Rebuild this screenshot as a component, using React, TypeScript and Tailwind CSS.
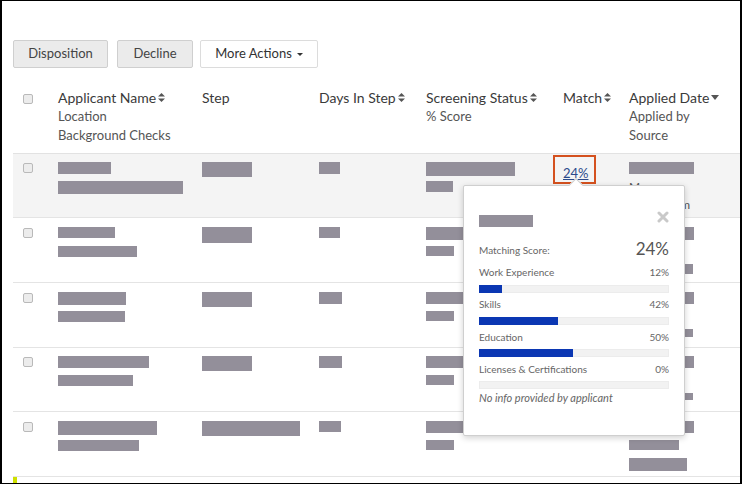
import React from 'react';

type Bar = [number, number];

interface RowData {
  h: number;
  pt: number;
  shaded?: boolean;
  name: Bar[];
  step: Bar;
  days: Bar;
  screen: Bar[];
  applied: (Bar | string)[];
  match?: string;
}

const ROWS: RowData[] = [
  {
    h: 63,
    pt: 8,
    shaded: true,
    name: [[53, 12], [125, 13]],
    step: [50, 15],
    days: [21, 12],
    screen: [[89, 14], [27, 11]],
    applied: [[65, 12], 'Ma', 'Indeed.com'],
    match: '24%',
  },
  {
    h: 64,
    pt: 9,
    name: [[57, 11], [79, 11]],
    step: [50, 16],
    days: [21, 11],
    screen: [[80, 13], [28, 10]],
    applied: [[65, 13], [48, 11], [64, 10]],
  },
  {
    h: 64,
    pt: 9,
    name: [[68, 13], [67, 11]],
    step: [50, 15],
    days: [23, 12],
    screen: [[80, 12], [28, 10]],
    applied: [[65, 12], [48, 11], [64, 8]],
  },
  {
    h: 63,
    pt: 8,
    name: [[91, 12], [75, 11]],
    step: [50, 15],
    days: [23, 12],
    screen: [[80, 12], [28, 10]],
    applied: [[65, 12], [48, 11], [64, 7]],
  },
  {
    h: 64,
    pt: 9,
    name: [[99, 14], [81, 11]],
    step: [98, 15],
    days: [22, 11],
    screen: [[80, 12], [28, 10]],
    applied: [[65, 12], [50, 10], [58, 13]],
  },
];

const SKILLS = [
  { label: 'Work Experience', pct: 12 },
  { label: 'Skills', pct: 42 },
  { label: 'Education', pct: 50 },
  { label: 'Licenses & Certifications', pct: 0 },
];

function SortIcon() {
  return (
    <svg width="7" height="9" viewBox="0 0 7 9" className="ml-[2px] shrink-0">
      <polygon points="0,3.6 3.5,0 7,3.6" fill="#555" />
      <polygon points="0,5.4 3.5,9 7,5.4" fill="#555" />
    </svg>
  );
}

function Caret({ w = 8, h = 5, color = '#555' }: { w?: number; h?: number; color?: string }) {
  return (
    <svg width={w} height={h} viewBox={`0 0 ${w} ${h}`} className="ml-[2px] shrink-0">
      <polygon points={`0,0 ${w},0 ${w / 2},${h}`} fill={color} />
    </svg>
  );
}

function Checkbox() {
  return <span className="block w-[10px] h-[10px] rounded-[2px] border border-[#b9b9b9] bg-[#ececec]" />;
}

function Blk({ bar }: { bar: Bar }) {
  return <div className="bg-[#938f9a]" style={{ width: bar[0], height: bar[1] }} />;
}

function Lines({ items }: { items: (Bar | string)[] }) {
  return (
    <div className="flex flex-col">
      {items.map((it, i) => (
        <div key={i} className="h-[18.5px]">
          {typeof it === 'string' ? (
            <span className="block text-[12px] leading-[14px] text-[#555] -mt-[1px]">{it}</span>
          ) : (
            <Blk bar={it} />
          )}
        </div>
      ))}
    </div>
  );
}

function HeaderCell({ title, subs, sort = true, caret = false, w }: { title: string; subs?: string[]; sort?: boolean; caret?: boolean; w: string }) {
  return (
    <div className={`${w} shrink-0`}>
      <div className="flex items-center h-[19px] text-[14px] text-[#3a3a3a] whitespace-nowrap">
        {title}
        {sort && <SortIcon />}
        {caret && <Caret />}
      </div>
      {subs?.map((s) => (
        <div key={s} className="h-[19px] leading-[19px] text-[13px] text-[#555] whitespace-nowrap">
          {s}
        </div>
      ))}
    </div>
  );
}

function MatchPopover() {
  return (
    <div className="absolute left-[461px] top-[184px] w-[222px] h-[251px] bg-white border border-[#cfcfcf] rounded-[2px] shadow-[0_2px_6px_rgba(0,0,0,0.18)] px-[15px] pt-[29px]">
      <div className="absolute left-[107px] -top-[6px] w-[10px] h-[10px] rotate-45 bg-white border-l border-t border-[#cfcfcf]" />
      <div className="flex items-start justify-between">
        <div className="w-[54px] h-[12px] bg-[#938f9a]" />
        <svg width="12" height="12" viewBox="0 0 12 12" className="-mt-[4px]">
          <path d="M2 2 L10 10 M10 2 L2 10" stroke="#c9c9c9" strokeWidth="3" strokeLinecap="round" />
        </svg>
      </div>
      <div className="flex items-end justify-between mt-[11px] h-[22px]">
        <span className="text-[10px] leading-[14px] text-[#666] mb-[3px]">Matching Score:</span>
        <span className="text-[17px] leading-[22px] text-[#555]">24%</span>
      </div>
      <div className="mt-[5px]">
        {SKILLS.map((s) => (
          <div key={s.label} className="h-[32.3px]">
            <div className="flex justify-between text-[10px] leading-[14px] text-[#666]">
              <span>{s.label}</span>
              <span>{s.pct}%</span>
            </div>
            <div className="mt-[5.5px] h-[8px] bg-[#f2f2f2] border border-[#ececec]">
              {s.pct > 0 && <div className="bg-[#0b37b3] -m-px" style={{ width: `${s.pct}%`, height: 8 }} />}
            </div>
          </div>
        ))}
      </div>
      <div className="-mt-[3px] text-[11px] leading-[14px] italic text-[#666]">No info provided by applicant</div>
    </div>
  );
}

export default function App() {
  return (
    <div
      className="relative w-[742px] h-[484px] overflow-hidden bg-white border-black border-l-2 border-r-2 border-t border-b"
      style={{ fontFamily: 'Lato, "Open Sans", sans-serif' }}
    >
      {/* Toolbar */}
      <div className="flex gap-[10px] pl-[11px] pt-[39px]">
        <button className="h-[28px] w-[95px] bg-[#ebebeb] border border-[#cfcfcf] rounded-[2px] text-[13px] text-[#444]">Disposition</button>
        <button className="h-[28px] w-[76px] bg-[#ebebeb] border border-[#cfcfcf] rounded-[2px] text-[13px] text-[#444] -ml-[1px]">Decline</button>
        <button className="h-[28px] w-[118px] bg-white border border-[#dcdcdc] rounded-[2px] text-[13px] text-[#333] flex items-center justify-center -ml-[3px]">
          More Actions
          <span className="ml-[3px]"><Caret w={6} h={3} color="#333" /></span>
        </button>
      </div>

      {/* Table */}
      <div className="ml-[11px] mt-[20px] w-[760px]">
        <div className="flex h-[66px] border-b border-[#e2e2e2]">
          <div className="w-[45px] shrink-0 pl-[10px] pt-[6px]">
            <Checkbox />
          </div>
          <HeaderCell w="w-[144px]" title="Applicant Name" subs={['Location', 'Background Checks']} />
          <HeaderCell w="w-[117px]" title="Step" sort={false} />
          <HeaderCell w="w-[107px]" title="Days In Step" />
          <HeaderCell w="w-[137px]" title="Screening Status" subs={['% Score']} />
          <HeaderCell w="w-[66px]" title="Match" />
          <HeaderCell w="w-[140px]" title="Applied Date" sort={false} caret subs={['Applied by', 'Source']} />
        </div>

        {ROWS.map((r, i) => (
          <div
            key={i}
            className={`flex border-b border-[#e4e4e4] ${r.shaded ? 'bg-[#f4f4f4]' : 'bg-white'}`}
            style={{ height: r.h + 1, paddingTop: r.pt }}
          >
            <div className="w-[45px] shrink-0 pl-[10px] pt-[1px]">
              <Checkbox />
            </div>
            <div className="w-[144px] shrink-0">
              <Lines items={r.name} />
            </div>
            <div className="w-[117px] shrink-0">
              <Blk bar={r.step} />
            </div>
            <div className="w-[107px] shrink-0">
              <Blk bar={r.days} />
            </div>
            <div className="w-[137px] shrink-0">
              <Lines items={r.screen} />
            </div>
            <div className="w-[66px] shrink-0">
              {r.match && (
                <span className="-ml-[10px] -mt-[7px] block w-[43px] h-[29px] border-2 border-[#d4511f] pl-[8px] pt-[3px]">
                  <a className="text-[13px] leading-[16px] text-[#2b4a8b] underline">{r.match}</a>
                </span>
              )}
            </div>
            <div className="w-[140px] shrink-0">
              <Lines items={r.applied} />
            </div>
          </div>
        ))}

        <div className="h-[10px] border-l-4 border-[#cfe000]" />
      </div>

      <MatchPopover />
    </div>
  );
}
